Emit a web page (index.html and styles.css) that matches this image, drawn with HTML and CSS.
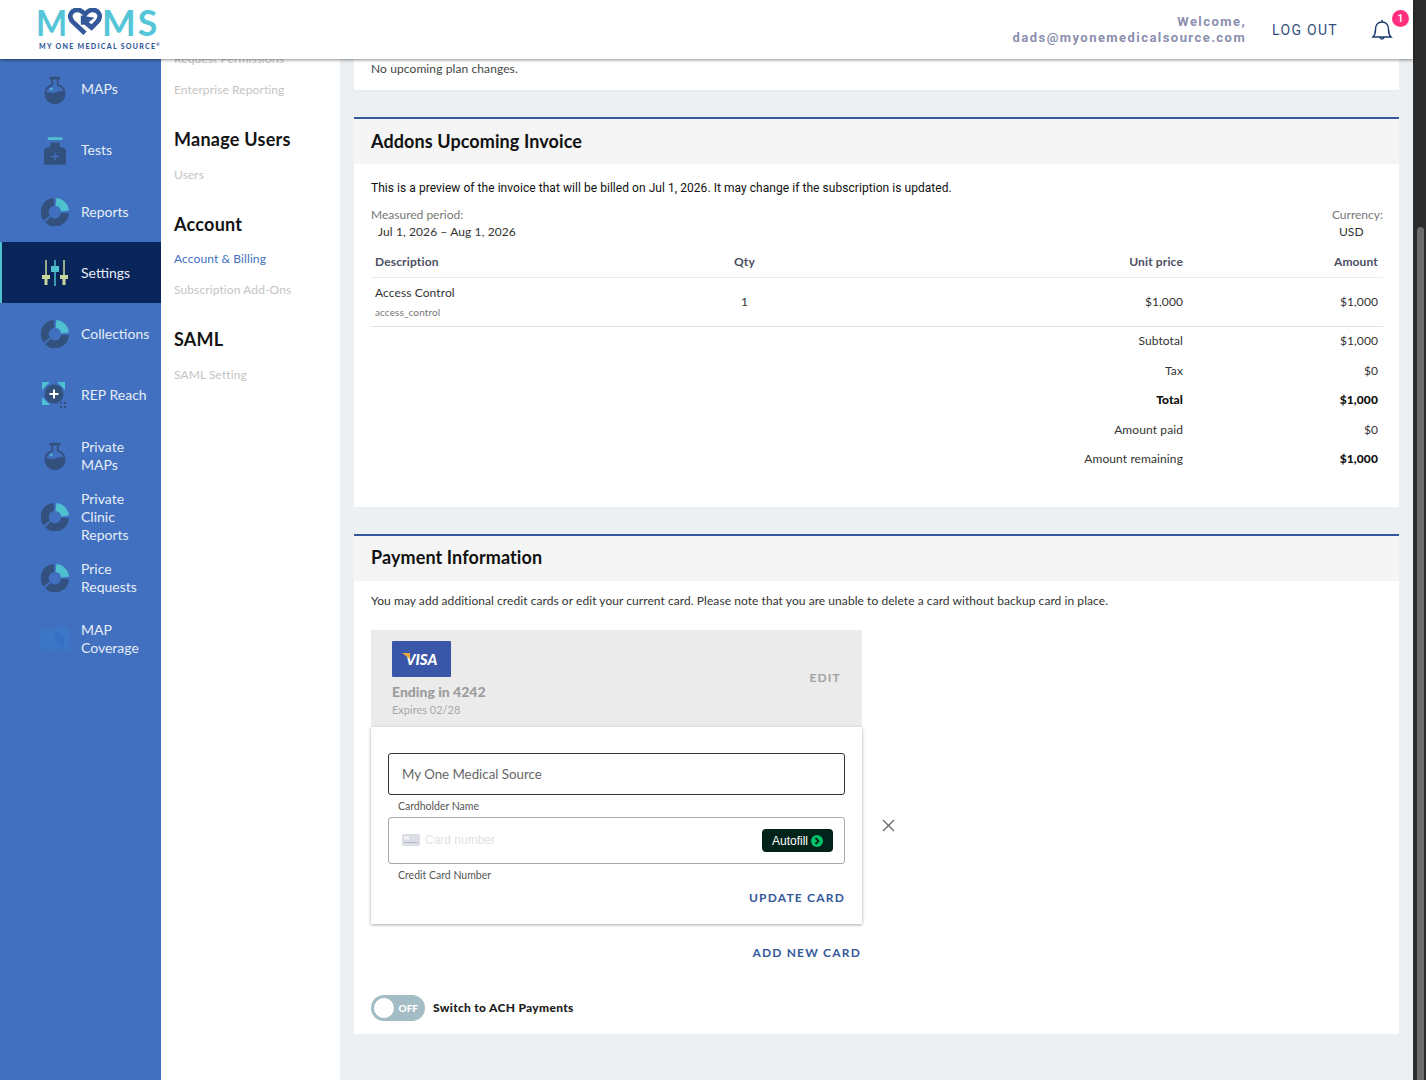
FILE: index.html
```html
<!DOCTYPE html>
<html lang="en">
<head>
  <meta charset="UTF-8">
  <meta name="viewport" content="width=device-width, initial-scale=1.0">
  <title>Account &amp; Billing | MOMS</title>
  <link rel="stylesheet" href="styles.css">
</head>
<body>
  <svg class="icon-defs" width="0" height="0">
    <symbol id="ico-flask" viewBox="0 0 24 30">
      <rect x="6" y="0.5" width="12" height="3" rx="1" fill="#33517f"/>
      <path d="M9 3v6.5C4.500 11 1.500 14.800 1.500 19c0 5.800 4.700 10.500 10.500 10.500S22.500 24.800 22.500 19c0-4.200-3-8-7.500-9.500V3" fill="none" stroke="#33517f" stroke-width="2"/>
      <path d="M2 18c4-1 6 1 10 0s6-3 10-1c.8 7-4 12.500-10 12.500S1.500 24.500 2 18z" fill="#33517f"/>
      <circle cx="8" cy="14" r="1.400" fill="#4fc0d0"/>
    </symbol>
    <symbol id="ico-bottle" viewBox="0 0 24 30">
      <rect x="4" y="0" width="16" height="3" fill="#4fc0d0"/>
      <path d="M7 6h10v4l5 2c1 .6 2 1.500 2 3v14a1 1 0 0 1-1 1H1a1 1 0 0 1-1-1V15c0-1.500 1-2.400 2-3l5-2z" fill="#33517f"/>
      <path d="M12 17v8M8 21h8" stroke="#4070bf" stroke-width="1.500"/>
    </symbol>
    <symbol id="ico-donut" viewBox="0 0 28 28">
      <path d="M15 4A10 10 0 0 1 24 13" fill="none" stroke="#4fc0d0" stroke-width="8"/>
      <path d="M24 15A10 10 0 0 1 7 21.500" fill="none" stroke="#33517f" stroke-width="8"/>
      <path d="M5.700 20A10 10 0 0 1 13 4" fill="none" stroke="#33517f" stroke-width="8"/>
    </symbol>
    <symbol id="ico-sliders" viewBox="0 0 26 26">
      <path d="M4 0v15M22 0v15" stroke="#c9d89a" stroke-width="1.500"/>
      <path d="M13 0v6M13 12v14" stroke="#4fc0d0" stroke-width="1.500"/>
      <path d="M0 15h8v4H5.500v6h-3v-6H0zM18 15h8v4h-2.500v6h-3v-6H18z" fill="#c9d89a"/>
      <rect x="9" y="6" width="8" height="6" fill="#4fc0d0"/>
    </symbol>
    <symbol id="ico-reach" viewBox="0 0 26 26">
      <path d="M0 0h8L0 8zM15 0h8v8zM0 15l8 8H0z" fill="#4fc0d0"/>
      <circle cx="12" cy="12" r="9.500" fill="#33517f"/>
      <path d="M12 7.500v9M7.500 12h9" stroke="#fff" stroke-width="2"/>
      <path d="M18 20h2v2h-2zM22 20h2v2h-2zM18 24h2v2h-2zM22 24h2v2h-2z" fill="#33517f"/>
    </symbol>
    <symbol id="ico-coverage" viewBox="0 0 28 26">
      <path d="M0 1l9 2 9-3 10 2v24l-10-2-9 2-9-3z" fill="#3b76c7"/>
      <path d="M12 8l6-2 2 2 6 6-3 1-1 9-6-7-4-3z" fill="#3572c6"/>
    </symbol>
  </svg>

  <div class="page">
    <header class="topbar">
      <a class="logo">
        <span class="logo-word"><span class="logo-letters">M</span><svg class="logo-heart" viewBox="0 0 36 30"><path d="M18 27 5 15C-1 8 4 2 10 2c4 0 6 2 8 5 2-3 4-5 8-5 6 0 11 6 5 13l-6 6-7-6 4-3-6-1v7" fill="none" stroke="#33599a" stroke-width="5"/></svg><span class="logo-letters logo-tail">MS</span></span>
        <span class="logo-sub">MY ONE MEDICAL SOURCE<sup>®</sup></span>
      </a>
      <div class="welcome">Welcome,<br>dads@myonemedicalsource.com</div>
      <a class="logout">LOG OUT</a>
      <div class="bell">
        <svg width="22" height="22" viewBox="0 0 22 22"><path d="M2 18c2-2 2.500-3.500 2.500-7.500C4.500 6 7 3 11 3s6.500 3 6.500 7.500c0 4 .5 5.500 2.500 7.500zM9 18.500c.3 2 3.700 2 4 0M11 1v2" fill="none" stroke="#1d3a70" stroke-width="1.500"/></svg>
        <span class="badge">1</span>
      </div>
    </header>

    <div class="layout">
      <nav class="sidebar">
        <a class="nav-item"><span class="nav-icon"><svg width="22" height="28"><use href="#ico-flask"/></svg></span>MAPs</a>
        <a class="nav-item"><span class="nav-icon"><svg width="22" height="28"><use href="#ico-bottle"/></svg></span>Tests</a>
        <a class="nav-item"><span class="nav-icon"><svg width="28" height="28"><use href="#ico-donut"/></svg></span>Reports</a>
        <a class="nav-item active"><span class="nav-icon"><svg width="26" height="26"><use href="#ico-sliders"/></svg></span>Settings</a>
        <a class="nav-item"><span class="nav-icon"><svg width="28" height="28"><use href="#ico-donut"/></svg></span>Collections</a>
        <a class="nav-item"><span class="nav-icon"><svg width="26" height="26"><use href="#ico-reach"/></svg></span>REP Reach</a>
        <a class="nav-item"><span class="nav-icon"><svg width="22" height="28"><use href="#ico-flask"/></svg></span>Private<br>MAPs</a>
        <a class="nav-item"><span class="nav-icon"><svg width="28" height="28"><use href="#ico-donut"/></svg></span>Private<br>Clinic<br>Reports</a>
        <a class="nav-item"><span class="nav-icon"><svg width="28" height="28"><use href="#ico-donut"/></svg></span>Price<br>Requests</a>
        <a class="nav-item"><span class="nav-icon"><svg width="28" height="26"><use href="#ico-coverage"/></svg></span>MAP<br>Coverage</a>
      </nav>

      <aside class="submenu">
        <div class="submenu-scroll">
          <a class="sub-link">Request Permissions</a>
          <a class="sub-link">Enterprise Reporting</a>
          <h3>Manage Users</h3>
          <a class="sub-link">Users</a>
          <h3>Account</h3>
          <a class="sub-link current">Account &amp; Billing</a>
          <a class="sub-link">Subscription Add-Ons</a>
          <h3>SAML</h3>
          <a class="sub-link">SAML Setting</a>
        </div>
      </aside>

      <main class="content">
        <section class="card card-cut">
          <p class="plan-note">No upcoming plan changes.</p>
        </section>

        <section class="card invoice">
          <h2 class="card-title">Addons Upcoming Invoice</h2>
          <div class="card-body">
            <p class="preview">This is a preview of the invoice that will be billed on Jul 1, 2026. It may change if the subscription is updated.</p>
            <div class="period">
              <div>
                <div class="meta-label">Measured period:</div>
                <div class="meta-value">Jul 1, 2026 – Aug 1, 2026</div>
              </div>
              <div>
                <div class="meta-label">Currency:</div>
                <div class="meta-value">USD</div>
              </div>
            </div>
            <table class="lines">
              <colgroup><col class="col-desc"><col class="col-qty"><col class="col-unit"><col class="col-amount"></colgroup>
              <thead>
                <tr><th>Description</th><th class="center">Qty</th><th class="right">Unit price</th><th class="right">Amount</th></tr>
              </thead>
              <tbody>
                <tr class="line-item">
                  <td>Access Control<small>access_control</small></td>
                  <td class="center">1</td>
                  <td class="right">$1,000</td>
                  <td class="right">$1,000</td>
                </tr>
                <tr class="sum"><td colspan="3" class="right">Subtotal</td><td class="right">$1,000</td></tr>
                <tr class="sum"><td colspan="3" class="right">Tax</td><td class="right">$0</td></tr>
                <tr class="sum strong"><td colspan="3" class="right">Total</td><td class="right">$1,000</td></tr>
                <tr class="sum"><td colspan="3" class="right">Amount paid</td><td class="right">$0</td></tr>
                <tr class="sum"><td colspan="3" class="right">Amount remaining</td><td class="right amount-strong">$1,000</td></tr>
              </tbody>
            </table>
          </div>
        </section>

        <section class="card payment">
          <h2 class="card-title">Payment Information</h2>
          <div class="card-body">
            <p class="pay-note">You may add additional credit cards or edit your current card. Please note that you are unable to delete a card without backup card in place.</p>

            <div class="card-editor">
              <div class="saved-card">
                <div class="saved-info">
                  <div class="visa"><span class="visa-flick"></span>VISA</div>
                  <div class="ending">Ending in 4242</div>
                  <div class="expires">Expires 02/28</div>
                </div>
                <a class="edit">EDIT</a>
              </div>
              <div class="card-form">
                <div class="field field-name">My One Medical Source</div>
                <label class="field-label">Cardholder Name</label>
                <div class="field field-number">
                  <svg class="card-glyph" width="18" height="12" viewBox="0 0 18 12"><rect width="18" height="12" rx="1.500" fill="#dcdee6"/><rect x="2" y="2.500" width="5" height="3" fill="#f4f5f8"/><rect x="2" y="8" width="14" height="1" fill="#b4b8c4"/></svg>
                  <span class="card-placeholder">Card number</span>
                  <span class="autofill">Autofill<svg width="12" height="12" viewBox="0 0 12 12"><circle cx="6" cy="6" r="6" fill="#00c46a"/><path d="M4.500 3 7.500 6l-3 3" fill="none" stroke="#02231a" stroke-width="1.800"/></svg></span>
                </div>
                <label class="field-label">Credit Card Number</label>
                <div class="form-actions"><a class="text-btn">UPDATE CARD</a></div>
              </div>
              <svg class="close-x" width="13" height="13" viewBox="0 0 13 13"><path d="M1 1l11 11M12 1 1 12" stroke="#666" stroke-width="1.300"/></svg>
            </div>

            <div class="add-row"><a class="text-btn">ADD NEW CARD</a></div>

            <div class="ach">
              <span class="toggle"><span class="knob"></span><span class="toggle-text">OFF</span></span>
              <span class="ach-label">Switch to ACH Payments</span>
            </div>
          </div>
        </section>
      </main>
    </div>
  </div>

  <div class="scrollbar"><div class="thumb"></div></div>
</body>
</html>
```

FILE: styles.css
```css
/* Base */
html, body {
  height: 100%;
}

body {
  margin: 0;
  display: flex;
  overflow: hidden;
  font-family: Lato, 'Noto Sans', sans-serif;
  font-size: 12px;
  color: #222;
  background: #ecf0f3;
}

.icon-defs {
  position: absolute;
}

.page {
  flex: 1;
  min-width: 0;
  display: flex;
  flex-direction: column;
}

/* Scrollbar */
.scrollbar {
  width: 13px;
  flex: none;
  background: #2c2c2c;
  padding-top: 227px;
  box-sizing: border-box;
}

.thumb {
  width: 7px;
  height: 853px;
  margin-left: 4px;
  border-radius: 4px 4px 0 0;
  background: #6b6b6b;
}

/* Top bar */
.topbar {
  height: 59px;
  flex: none;
  display: flex;
  align-items: center;
  background: #fff;
  box-shadow: 0 1px 3px rgba(0, 0, 0, 0.45);
  position: relative;
  z-index: 2;
  padding: 0 0 0 36px;
}

.logo {
  display: flex;
  flex-direction: column;
  margin-right: auto;
  align-self: flex-start;
  padding-top: 5px;
}

.logo-word {
  display: flex;
  align-items: center;
  height: 33px;
  font-size: 33px;
  line-height: 33px;
  font-weight: 700;
  color: #55c5d8;
}

.logo-letters {
  transform: scaleY(1.12);
  letter-spacing: 2px;
}

.logo-tail {
  transform: scale(1.08, 1.12);
  transform-origin: left center;
}

.logo-heart {
  width: 34px;
  height: 28px;
  margin-left: -1px;
}

.logo-sub {
  font-size: 7px;
  line-height: 9px;
  margin-top: 4px;
  margin-left: 3px;
  font-weight: 900;
  letter-spacing: 1.300px;
  color: #33599a;
  white-space: nowrap;
}

.logo-sub sup {
  font-size: 4px;
  line-height: 0;
}

.welcome {
  font-family: Roboto, sans-serif;
  font-weight: 700;
  font-size: 13px;
  line-height: 16px;
  letter-spacing: 1.450px;
  text-align: right;
  color: #8a8fae;
}

.logout {
  margin-left: 26px;
  font-family: Roboto, sans-serif;
  font-size: 14px;
  letter-spacing: 1.300px;
  color: #33517f;
}

.bell {
  position: relative;
  width: 22px;
  height: 22px;
  margin-left: 33px;
  margin-right: 20px;
}

.bell svg {
  display: block;
}

.badge {
  position: absolute;
  top: -9px;
  left: 21px;
  width: 17px;
  height: 17px;
  border-radius: 50%;
  background: #ff2f7e;
  color: #fff;
  font-family: Roboto, sans-serif;
  font-size: 11px;
  font-weight: 500;
  line-height: 17px;
  text-align: center;
}

/* Layout */
.layout {
  flex: 1;
  min-height: 0;
  display: flex;
}

/* Sidebar */
.sidebar {
  width: 161px;
  flex: none;
  background: #4070bf;
}

.nav-item {
  height: 61.100px;
  box-sizing: border-box;
  position: relative;
  display: flex;
  flex-direction: column;
  justify-content: center;
  align-items: flex-start;
  padding-left: 81px;
  font-size: 14px;
  line-height: 18.400px;
  color: #e6edf8;
}

.nav-item.active {
  background: #0a2559;
  border-left: 2px solid #4fc0d0;
  padding-left: 79px;
}

.nav-icon {
  position: absolute;
  left: 41px;
  top: 0;
  bottom: 0;
  width: 28px;
  display: flex;
  align-items: center;
  justify-content: center;
}

.nav-item.active .nav-icon {
  left: 39px;
}

/* Submenu */
.submenu {
  width: 179px;
  flex: none;
  background: #fff;
  overflow: hidden;
}

.submenu-scroll {
  margin-top: -9px;
  padding-left: 13px;
}

.sub-link {
  display: block;
  height: 18px;
  margin-bottom: 13px;
  font-size: 12px;
  line-height: 18px;
  color: #c4c4c4;
  letter-spacing: 0.100px;
}

.sub-link.current {
  color: #4070bf;
}

.submenu h3 {
  margin: 28px 0 14.500px;
  font-size: 18px;
  line-height: 24px;
  font-weight: 700;
  letter-spacing: 0.250px;
  color: #141414;
}

/* Content */
.content {
  flex: 1;
  min-width: 0;
  overflow: hidden;
  padding: 0 14px;
}

.card {
  background: #fff;
  margin-bottom: 27px;
}

.card-cut {
  height: 32px;
  margin-bottom: 26px;
  border-bottom: 1px solid #e6e9ec;
  box-sizing: border-box;
  padding: 3px 17px;
}

.plan-note {
  margin: 0;
  font-size: 12px;
  line-height: 14px;
  letter-spacing: 0.100px;
  color: #444;
}

.invoice, .payment {
  border-top: 2px solid #33599a;
}

.invoice {
  height: 388px;
}

.payment {
  height: 498px;
  margin-bottom: 0;
}

.card-title {
  margin: 0;
  height: 45px;
  padding-left: 17px;
  background: #f5f5f5;
  font-size: 18px;
  line-height: 44px;
  font-weight: 700;
  letter-spacing: 0.100px;
  color: #111;
}

.payment .card-title {
  line-height: 43px;
}

.card-body {
  padding: 0 16px 0 17px;
}

.preview {
  margin: 0;
  padding-top: 16px;
  font-family: Roboto, sans-serif;
  font-size: 12px;
  line-height: 16px;
  letter-spacing: 0.050px;
  color: #111;
}

.period {
  display: flex;
  justify-content: space-between;
  margin-top: 10px;
}

.meta-label {
  font-size: 12px;
  line-height: 17px;
  color: #777;
}

.meta-value {
  padding-left: 7px;
  font-size: 12px;
  line-height: 17px;
  letter-spacing: 0.100px;
  color: #333;
}

/* Invoice table */
.lines {
  width: 100%;
  margin-top: 7px;
  border-collapse: collapse;
  table-layout: fixed;
}

.col-desc { width: 329px; }
.col-qty { width: 90px; }
.col-amount { width: 195px; }

.lines th, .lines td {
  padding: 0 5px 0 4px;
  font-size: 12px;
  letter-spacing: 0.100px;
  text-align: left;
}

.lines .center { text-align: center; }
.lines .right { text-align: right; }

.lines th {
  height: 28px;
  padding-bottom: 2px;
  font-weight: 700;
  letter-spacing: 0.150px;
  color: #4b4f63;
  border-bottom: 1px solid #e8ecef;
}

.line-item td {
  height: 46px;
  padding-bottom: 2px;
  color: #333;
  border-bottom: 1px solid #e0e3e6;
}

.line-item small {
  display: block;
  margin-top: 6px;
  font-size: 10px;
  color: #777;
}

.sum td {
  height: 27.500px;
  padding-bottom: 2px;
  color: #333;
}

.sum.strong td, .sum .amount-strong {
  font-weight: 900;
  color: #111;
}

/* Payment */
.pay-note {
  margin: 0;
  padding-top: 12px;
  line-height: 16px;
  font-size: 12px;
  letter-spacing: 0.060px;
  color: #333;
}

.card-editor {
  position: relative;
  width: 491px;
  margin-top: 21px;
}

.saved-card {
  height: 97px;
  box-sizing: border-box;
  padding: 11px 21px 0 21px;
  background: #ebebeb;
  display: flex;
  justify-content: space-between;
}

.visa {
  width: 59px;
  height: 36px;
  border-radius: 1px;
  background: #3a56a8;
  display: flex;
  align-items: center;
  justify-content: center;
  position: relative;
  color: #fff;
  font-size: 15px;
  font-weight: 900;
  font-style: italic;
}

.visa-flick {
  position: absolute;
  left: 10px;
  top: 12px;
  width: 8px;
  height: 6px;
  background: #e9a63a;
  clip-path: polygon(0 0, 100% 0, 100% 100%);
}

.ending {
  margin-top: 6px;
  font-size: 14px;
  line-height: 17px;
  font-weight: 900;
  color: #9c9c9c;
}

.expires {
  margin-top: 2px;
  font-size: 11px;
  line-height: 15px;
  color: #a8a8a8;
}

.edit {
  margin-top: 29px;
  height: 16px;
  font-size: 12px;
  line-height: 16px;
  font-weight: 700;
  letter-spacing: 1.200px;
  color: #a2a2a2;
}

.card-form {
  height: 197px;
  box-sizing: border-box;
  padding: 26px 17px 0;
  background: #fff;
  box-shadow: 0 1px 3px rgba(0, 0, 0, 0.35);
}

.field {
  box-sizing: border-box;
  border-radius: 3px;
  padding-left: 13px;
  display: flex;
  align-items: center;
}

.field-name {
  height: 42px;
  border: 1px solid #333;
  font-size: 13.300px;
  color: #666;
}

.field-number {
  height: 47px;
  border: 1px solid #aaa;
  padding-right: 11px;
}

.field-label {
  display: block;
  height: 22px;
  padding-left: 10px;
  font-size: 10.500px;
  line-height: 23px;
  color: #555;
}

.card-glyph {
  margin-top: -2px;
}

.card-placeholder {
  margin-left: 5px;
  margin-top: -2px;
  font-family: 'Liberation Sans', sans-serif;
  font-size: 12px;
  color: #dfe1e8;
}

.autofill {
  margin-left: auto;
  width: 71px;
  height: 23px;
  box-sizing: border-box;
  border-radius: 4px;
  background: #02231a;
  display: flex;
  align-items: center;
  justify-content: center;
  gap: 3px;
  font-family: 'Liberation Sans', sans-serif;
  font-size: 12px;
  color: #fff;
}

.form-actions {
  display: flex;
  justify-content: flex-end;
  margin-top: 4px;
}

.text-btn {
  font-size: 12px;
  line-height: 16px;
  font-weight: 700;
  letter-spacing: 1.200px;
  color: #33599a;
}

.close-x {
  position: absolute;
  left: 511px;
  top: 189px;
}

.add-row {
  width: 490px;
  display: flex;
  justify-content: flex-end;
  margin-top: 21px;
}

.ach {
  display: flex;
  align-items: center;
  gap: 8px;
  margin-top: 34px;
}

.toggle {
  width: 54px;
  height: 26px;
  border-radius: 13px;
  background: #a4bcc4;
  display: flex;
  align-items: center;
  padding: 0 7px 0 3px;
  box-sizing: border-box;
  justify-content: space-between;
}

.knob {
  width: 20px;
  height: 20px;
  border-radius: 50%;
  background: #fff;
}

.toggle-text {
  font-size: 10px;
  font-weight: 900;
  color: #fff;
}

.ach-label {
  margin-top: -2px;
  font-size: 12px;
  font-weight: 900;
  letter-spacing: 0.300px;
  color: #1c1c1c;
}
```
